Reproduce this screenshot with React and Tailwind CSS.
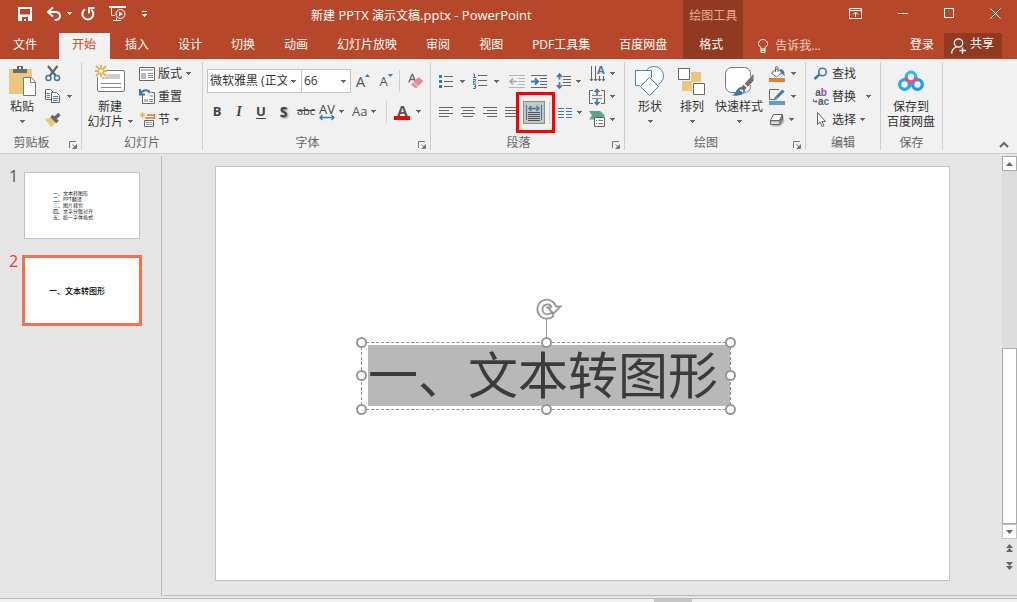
import React, { useState } from "react";

const TABS = ["插入", "设计", "切换", "动画", "幻灯片放映", "审阅", "视图", "PDF工具集", "百度网盘"];

const AGENDA = ["一、文本转图形", "二、PPT翻译", "三、图片裁剪", "四、文字分散对齐", "五、统一字体格式"];

function Svg({ w, h, children, className = "" }) {
  return (
    <svg
      width={w}
      height={h}
      viewBox={`0 0 ${w} ${h}`}
      fill="none"
      aria-hidden="true"
      className={`shrink-0 overflow-visible ${className}`}
    >
      {children}
    </svg>
  );
}

function Arrow({ className = "" }) {
  return (
    <Svg w={5} h={3} className={className}>
      <path d="M0 0h5v1h-1v1h-1v1h-1v-1h-1v-1h-1z" fill="currentColor" shapeRendering="crispEdges" />
    </Svg>
  );
}

function Group({ label, launcher, className, children }) {
  return (
    <section className={`flex h-[88px] shrink-0 flex-col border-r border-[#d0d0d0] ${className}`}>
      <div className="flex h-[69px]">{children}</div>
      <div className="flex h-[19px] items-end">
        <span className="flex-1 text-center leading-[14px] text-[#666]">{label}</span>
        {launcher && (
          <button type="button" aria-label={`${label}设置`} className="flex w-[18px] justify-center pb-px pl-0.5 text-[#777]">
            <Svg w={8} h={8}>
              <path d="M.5 7V.5H7M3.5 3.5l3 3M7.5 3.5v4h-4" stroke="currentColor" />
              <path d="M7 4v3H4z" fill="currentColor" />
            </Svg>
          </button>
        )}
      </div>
    </section>
  );
}

function BigButton({ icon, text, second, className }) {
  return (
    <button type="button" className={`flex shrink-0 flex-col items-center ${className}`}>
      <span className="flex h-[37px] items-center">{icon}</span>
      <span className="leading-[15px] whitespace-nowrap">{text}</span>
      <span className="flex h-[15px] items-center gap-1 leading-[15px] whitespace-nowrap">{second}</span>
    </button>
  );
}

function SmallButton({ icon, text, label, arrow }) {
  return (
    <button type="button" aria-label={label} className="flex h-[23px] items-center whitespace-nowrap">
      {icon}
      {text && <span className="ml-[3px]">{text}</span>}
      {arrow && <Arrow className={`text-[#666] ${arrow}`} />}
    </button>
  );
}

function IconButton({ label, className = "", children }) {
  return (
    <button type="button" aria-label={label} className={`flex h-[23px] shrink-0 items-center ${className}`}>
      {children}
    </button>
  );
}

function Lines({ rows }) {
  return (
    <Svg w={14} h={13}>
      {rows.map(([x, w], i) => (
        <path key={i} d={`M${x} ${i * 3 + 1.5}h${w}`} stroke="#666" />
      ))}
    </Svg>
  );
}

/* ---------- title bar and tabs ---------- */

function Header() {
  return (
    <header className="flex bg-[#b7472a] text-white">
      <div className="flex shrink-0 flex-col">
        <div className="flex h-[33px] items-start">
          <div className="flex h-[27px] w-[311px] items-center pl-[18px]">
            <button type="button" aria-label="保存">
              <Svg w={14} h={14}>
                <path d="M1 1h12v12H1z" stroke="#fff" strokeWidth="2" />
                <path d="M1 7.5h12V13H1z" fill="#fff" />
                <path d="M4 10h6v4H8v-2H6v2H4z" fill="#b7472a" />
              </Svg>
            </button>
            <button type="button" aria-label="撤消" className="ml-[14px] flex items-center gap-[5px]">
              <Svg w={16} h={14}>
                <path d="M2 5h7c3.500 0 5 1.800 5 4s-2 4-5.500 4" stroke="#fff" strokeWidth="2" />
                <path d="M7 .500L2 5l5 4.500" stroke="#fff" strokeWidth="2" />
              </Svg>
              <Arrow />
            </button>
            <button type="button" aria-label="重复" className="ml-[9px]">
              <Svg w={14} h={14}>
                <path d="M4 2.300A5.500 5.500 0 1 0 10 2.500" stroke="#fff" strokeWidth="2" />
                <path d="M8 6.500V1h5.500" stroke="#fff" strokeWidth="2" />
              </Svg>
            </button>
            <button type="button" aria-label="从头开始放映" className="ml-[14px]">
              <Svg w={18} h={16}>
                <path d="M0 1h17" stroke="#fff" strokeWidth="2" />
                <path d="M2.500 2v7.500H6M4 14.500h8M7.500 12v2" stroke="#fff" />
                <circle cx="11.500" cy="8" r="4.500" stroke="#fff" />
                <path d="M10 5.500l4 2.500-4 2.500z" fill="#fff" />
              </Svg>
            </button>
            <button type="button" aria-label="自定义快速访问工具栏" className="ml-[15px] flex flex-col items-center gap-0.5 pt-px">
              <span className="h-px w-[5px] bg-white" />
              <Arrow />
            </button>
          </div>
          <h1 className="text-[13px] leading-[31px] whitespace-nowrap">
            <span className="text-xs">新建</span> PPTX <span className="text-xs">演示文稿</span>.pptx - PowerPoint
          </h1>
        </div>
        <nav className="flex h-[26px] gap-0.5">
          <button type="button" className="mr-1.5 pr-[14px] pb-0.5 pl-[13px]">文件</button>
          <button type="button" className="bg-[#f1f1f1] pr-[14px] pb-0.5 pl-[13px] text-[#d24726]">开始</button>
          {TABS.map((tab) => (
            <button type="button" key={tab} className="pr-[14px] pb-0.5 pl-[13px] whitespace-nowrap">
              {tab}
            </button>
          ))}
        </nav>
      </div>

      <div className="ml-0.5 flex w-[60px] shrink-0 flex-col bg-[#923922] text-center">
        <span className="h-[33px] leading-[31px] text-[#eeaa93]">绘图工具</span>
        <button type="button" className="h-[26px] pr-1 pb-0.5">格式</button>
      </div>

      <div className="flex flex-1 flex-col">
        <div className="flex h-[33px] justify-end">
          <div className="flex h-[27px] items-center gap-[35px] pr-4">
            <button type="button" aria-label="功能区显示选项">
              <Svg w={14} h={11}>
                <path d="M.500 .500h12v10H.500zM1 2.500h11M6.500 9V4.500M4 6.500L6.500 4 9 6.500" stroke="#fff" />
              </Svg>
            </button>
            <button type="button" aria-label="最小化">
              <Svg w={11} h={11}><path d="M0 5.500h10" stroke="#fff" /></Svg>
            </button>
            <button type="button" aria-label="最大化">
              <Svg w={11} h={11}><path d="M.500 .500h9v9h-9z" stroke="#fff" /></Svg>
            </button>
            <button type="button" aria-label="关闭">
              <Svg w={11} h={11}><path d="M.500 .500l10 10M10.500 .500l-10 10" stroke="#fff" /></Svg>
            </button>
          </div>
        </div>
        <div className="flex h-[26px] items-center pr-[15px] pl-[15px]">
          <button type="button" className="flex items-center gap-[7px] text-[#f5d3c8]">
            <Svg w={10} h={14}>
              <path d="M3 10V8.500C1.500 7.500 .500 6.500 .500 4.800a4.500 4.300 0 0 1 9 0c0 1.700-1 2.700-2.500 3.700V10zM3 10v3.500h4V10M3 11.500h4" stroke="#fff" />
            </Svg>
            告诉我...
          </button>
          <button type="button" className="mr-2.5 ml-auto pb-0.5">登录</button>
          <button type="button" className="flex h-[25px] w-[58px] items-center gap-1 self-start bg-[#923922] pl-[7px]">
            <Svg w={15} h={16}>
              <circle cx="7.500" cy="5" r="4.200" stroke="#fff" strokeWidth="1.300" />
              <path d="M.700 15.500c0-3.500 2-5.500 4.500-6.500M8.500 12.500H15M11.500 9.500V16" stroke="#fff" strokeWidth="1.300" />
            </Svg>
            <span className="pb-1">共享</span>
          </button>
        </div>
      </div>
    </header>
  );
}

/* ---------- ribbon groups ---------- */

function ClipboardGroup() {
  return (
    <Group label="剪贴板" launcher className="w-[82px]">
      <BigButton
        className="ml-[7px] w-[30px]"
        text="粘贴"
        second={<Arrow className="text-[#666]" />}
        icon={
          <Svg w={28} h={32}>
            <path d="M1 4h23v25H1z" fill="#ecc67f" />
            <path d="M5 4h4V1h6v3h4v4H5z" fill="#6b6b6b" />
            <path d="M11 2h2v2h-2z" fill="#f1f1f1" />
            <path d="M15.500 12.500h8l4 5v13h-12z" fill="#fff" stroke="#777" />
            <path d="M22.500 12.500v5h5" stroke="#777" />
          </Svg>
        }
      />
      <div className="ml-[7px]">
        <SmallButton
          label="剪切"
          icon={
            <Svg w={17} h={17}>
              <path d="M4 1l7.500 9.500M13.500 1L6 10.500" stroke="#666" strokeWidth="2.200" />
              <circle cx="4.500" cy="13" r="2.500" stroke="#3f77ad" strokeWidth="1.500" />
              <circle cx="13" cy="13" r="2.500" stroke="#3f77ad" strokeWidth="1.500" />
            </Svg>
          }
        />
        <SmallButton
          label="复制"
          arrow="ml-1.5"
          icon={
            <Svg w={17} h={15}>
              <path d="M1.500 .500h5l3 3v7h-8z" fill="#fff" stroke="#666" />
              <path d="M3 4.500h3M3 6.500h3M3 8.500h3" stroke="#4a82b8" />
              <path d="M7.500 3.500h5l3 3v7h-8z" fill="#fff" stroke="#666" />
              <path d="M9 7.500h5M9 9.500h5M9 11.500h5" stroke="#4a82b8" />
            </Svg>
          }
        />
        <SmallButton
          label="格式刷"
          icon={
            <Svg w={17} h={16}>
              <path d="M1 7l6-1.500 5 5L7 15z" fill="#ecc67f" />
              <path d="M7.500 4l6 6M10 7l5.500-5" stroke="#666" strokeWidth="3.500" />
            </Svg>
          }
        />
      </div>
    </Group>
  );
}

function Spark({ x, y, r, color = "#e9b04c" }) {
  return (
    <path
      d={`M${x} ${y - r}v${2 * r}M${x - r} ${y}h${2 * r}M${x - r + 1} ${y - r + 1}l${2 * r - 2} ${2 * r - 2}M${x + r - 1} ${y - r + 1}l${2 - 2 * r} ${2 * r - 2}`}
      stroke={color}
      strokeWidth={r > 4 ? 1.8 : 1}
    />
  );
}

function SlidesGroup() {
  return (
    <Group label="幻灯片" className="w-[121px]">
      <BigButton
        className="ml-[5px] w-[46px]"
        text="新建"
        second={<>幻灯片<Arrow className="text-[#666]" /></>}
        icon={
          <Svg w={30} h={28} className="-mt-1">
            <rect x="2.500" y="5.500" width="27" height="21" rx="1.500" fill="#fff" stroke="#777" />
            <path d="M7 9h18v5H7z" fill="#ccc" />
            <path d="M6 18.500h20M6 22.500h20" stroke="#888" />
            <path d="M1 1h11v11H1z" fill="#f1f1f1" />
            <Spark x={6} y={6} r={6} />
            <circle cx="6" cy="6" r="1.800" fill="#fff" />
          </Svg>
        }
      />
      <div className="ml-1.5">
        <SmallButton
          text="版式"
          arrow="ml-1"
          icon={
            <Svg w={16} h={14}>
              <path d="M.500 .500h15v13H.500z" fill="#fff" stroke="#666" />
              <path d="M2 2h12v2H2zM2 6h5v6H2z" fill="#b9b9b9" />
              <path d="M9 6.500h5M9 8.500h5M9 10.500h5" stroke="#888" />
            </Svg>
          }
        />
        <SmallButton
          text="重置"
          icon={
            <Svg w={16} h={15}>
              <path d="M3.500 3.500h12v11h-12z" fill="#fff" stroke="#666" />
              <path d="M5 10h4v3H5zM11 6h3v2h-3z" fill="#b9b9b9" />
              <path d="M10 10.500h4M10 12.500h4" stroke="#888" />
              <path d="M2 5.500c1.500-4 7-5 9-1" stroke="#f1f1f1" strokeWidth="4" />
              <path d="M1.500 5c2-4.500 7.500-5 9.500-1M1 0v5.500H6" stroke="#3f77ad" strokeWidth="2" />
            </Svg>
          }
        />
        <SmallButton
          text="节"
          arrow="ml-1"
          icon={
            <Svg w={16} h={16}>
              <Spark x={3.5} y={3} r={3} />
              <path d="M8 3h7.500v3H6" stroke="#e27235" strokeWidth="1.300" />
              <path d="M5.500 8.500h9v6h-9z" fill="#fff" stroke="#666" />
              <path d="M7 10.500h6M7 12.500h6" stroke="#999" />
            </Svg>
          }
        />
      </div>
    </Group>
  );
}

function FontGroup() {
  const [font, setFont] = useState("微软雅黑 (正文)");
  const [size, setSize] = useState("66");

  return (
    <Group label="字体" launcher className="w-[228px]">
      <div className="pt-[7px]">
        <div className="flex h-6 items-center pl-1">
          <div className="relative">
            <select
              aria-label="字体"
              value={font}
              onChange={(e) => setFont(e.target.value)}
              className="block h-6 w-[95px] appearance-none border border-[#c3c3c3] bg-white pr-[14px] pl-0.5"
            >
              <option>微软雅黑 (正文)</option>
              <option>宋体</option>
            </select>
            <Arrow className="pointer-events-none absolute top-[11px] right-1.5 text-[#666]" />
          </div>
          <div className="relative -ml-px">
            <select
              aria-label="字号"
              value={size}
              onChange={(e) => setSize(e.target.value)}
              className="block h-6 w-[50px] appearance-none border border-[#c3c3c3] bg-white pr-[14px] pl-0.5"
            >
              <option>66</option>
              <option>60</option>
            </select>
            <Arrow className="pointer-events-none absolute top-[11px] right-[5px] text-[#666]" />
          </div>
          <IconButton label="增大字号" className="w-6 justify-center text-[#555]">
            <span className="text-[15px]">A</span>
            <Svg w={5} h={3} className="mb-3"><path d="M0 3h5L2.500 0z" fill="#3f77ad" /></Svg>
          </IconButton>
          <IconButton label="减小字号" className="w-[22px] justify-center text-[#555]">
            <span className="pt-0.5 text-[13px]">A</span>
            <Svg w={5} h={3} className="mb-3"><path d="M0 0h5L2.500 3z" fill="#3f77ad" /></Svg>
          </IconButton>
          <span className="ml-0.5 h-[22px] w-px bg-[#d0d0d0]" />
          <IconButton label="清除所有格式" className="ml-2">
            <Svg w={16} h={16}>
              <path d="M.800 9.500L4 1.500h.600l3.200 8M2 6.500h4.600" stroke="#666" strokeWidth="1.300" />
              <path d="M3 11.500L10.500 4l5 4L8 15.500z" fill="#e8899a" />
              <path d="M5 8.500l5.500 5.500" stroke="#f1f1f1" />
            </Svg>
          </IconButton>
        </div>

        <div className="mt-2 flex h-[23px] items-center pb-0.5 pl-[3px] text-[#444]">
          <IconButton label="加粗" className="w-[22px] justify-center text-[13px] font-bold">B</IconButton>
          <IconButton label="倾斜" className="w-[22px] justify-center font-['Liberation_Serif',serif] text-sm font-bold italic">I</IconButton>
          <IconButton label="下划线" className="w-[22px] justify-center text-[13px] font-bold underline underline-offset-2">U</IconButton>
          <IconButton label="文字阴影" className="w-[23px] justify-center text-sm font-bold [text-shadow:1px_1px_2px_#777]">S</IconButton>
          <IconButton label="删除线" className="w-[22px] justify-center text-[11px] line-through">abc</IconButton>
          <IconButton label="字符间距" className="ml-[2px] gap-1">
            <span className="flex w-4 flex-col items-center">
              <span className="text-[13px] leading-[11px]">AV</span>
              <Svg w={16} h={5}><path d="M1 2.500h14M3.500 0L1 2.500 3.500 5M12.500 0L15 2.500 12.500 5" stroke="#3f77ad" strokeWidth="1.300" /></Svg>
            </span>
            <Arrow className="text-[#666]" />
          </IconButton>
          <IconButton label="更改大小写" className="ml-2 gap-1 text-[13px]">
            <span className="text-[#555]">Aa</span>
            <Arrow className="text-[#666]" />
          </IconButton>
          <span className="ml-[10px] h-[22px] w-px bg-[#d0d0d0]" />
          <IconButton label="字体颜色" className="ml-[7px] gap-1.5">
            <span className="flex w-4 flex-col items-center border-b-4 border-[#ff0000] text-[15px] leading-3 font-bold text-[#555]">A</span>
            <Arrow className="text-[#666]" />
          </IconButton>
        </div>
      </div>
    </Group>
  );
}

function ParagraphGroup() {
  return (
    <Group label="段落" launcher className="w-[194px]">
      <div className="w-[158px] pt-[7px]">
        <div className="flex h-6 items-center pl-2">
          <IconButton label="项目符号" className="gap-[7px]">
            <Svg w={14} h={15}>
              <path d="M0 1h3v3H0zM0 6h3v3H0zM0 11h3v3H0z" fill="#3f77ad" />
              <path d="M5 2.500h9M5 7.500h9M5 12.500h9" stroke="#666" />
            </Svg>
            <Arrow className="text-[#666]" />
          </IconButton>
          <IconButton label="编号" className="ml-2 gap-[7px]">
            <Svg w={14} h={16}>
              <path d="M0 1h1.500v3M0 4.500h3M0 6.500h2.500v1.500H.500V10H3M0 11.500h2.500v4H0M1 13.500h1.500" stroke="#3f77ad" />
              <path d="M5 2.500h9M5 7.500h9M5 12.500h9" stroke="#666" />
            </Svg>
            <Arrow className="text-[#666]" />
          </IconButton>
          <IconButton label="降低列表级别" className="ml-2.5">
            <Svg w={16} h={13}>
              <path d="M0 .500h16M9 3.500h7M9 6.500h7M9 9.500h7M0 12.500h16" stroke="#b5b5b5" />
              <path d="M1 6.500h7M4 3.500L1 6.500l3 3" stroke="#a8a8a8" strokeWidth="1.700" />
            </Svg>
          </IconButton>
          <IconButton label="提高列表级别" className="ml-1.5">
            <Svg w={16} h={13}>
              <path d="M0 .500h16M9 3.500h7M9 6.500h7M9 9.500h7M0 12.500h16" stroke="#666" />
              <path d="M0 6.500h7M4 3.500l3 3-3 3" stroke="#3f77ad" strokeWidth="2" />
            </Svg>
          </IconButton>
          <IconButton label="行距" className="ml-2.5 gap-[5px]">
            <Svg w={14} h={16}>
              <path d="M2.500 1v5.500M2.500 9v6M0 4l2.500-3L5 4M0 12l2.500 3L5 12" stroke="#3f77ad" strokeWidth="1.700" />
              <path d="M6 3.500h8M6 6.500h8M6 9.500h8M6 12.500h8" stroke="#666" />
            </Svg>
            <Arrow className="text-[#666]" />
          </IconButton>
        </div>
        <div className="mt-2 flex h-[23px] items-center pl-2">
          <IconButton label="左对齐"><Lines rows={[[0, 14], [0, 10], [0, 14], [0, 10]]} /></IconButton>
          <IconButton label="居中" className="ml-2"><Lines rows={[[0, 14], [2, 10], [0, 14], [2, 10]]} /></IconButton>
          <IconButton label="右对齐" className="ml-2"><Lines rows={[[0, 14], [4, 10], [0, 14], [4, 10]]} /></IconButton>
          <IconButton label="两端对齐" className="ml-2"><Lines rows={[[0, 14], [0, 14], [0, 14], [0, 14]]} /></IconButton>
          <IconButton label="分散对齐" className="relative ml-1 w-[22px] justify-center border border-[#8f8f8f] bg-[#c5c5c5]">
            <Svg w={16} h={17}>
              <path d="M.500 1v15M15.500 1v15" stroke="#3f77ad" />
              <path d="M2.500 4.500h11M5.500 2L3 4.500 5.500 7M10.500 2L13 4.500 10.500 7" stroke="#3f77ad" strokeWidth="1.400" />
              <path d="M2 8.500h12M2 10.500h12M2 12.500h12M2 14.500h12M2 16.500h12" stroke="#555" />
            </Svg>
            <span className="pointer-events-none absolute -top-2.5 -right-[11px] -bottom-2.5 -left-2 border-3 border-[#ff0000]" />
          </IconButton>
          <span className="ml-1 h-[22px] w-px bg-[#d0d0d0]" />
          <IconButton label="分栏" className="ml-2 gap-[5px]">
            <Svg w={14} h={12}>
              <path d="M0 1.500h6M8 1.500h6M0 4.500h6M8 4.500h6M0 7.500h6M8 7.500h6M0 10.500h6M8 10.500h6" stroke="#3f77ad" />
            </Svg>
            <Arrow className="text-[#666]" />
          </IconButton>
        </div>
      </div>
      <div>
        <SmallButton
          label="文字方向"
          arrow="ml-1"
          icon={
            <Svg w={17} h={17}>
              <path d="M2.500 1v15M6.500 1v15M10.500 11v5M14.500 11v5M1 14l1.500 2L4 14M5 14l1.500 2L8 14M9 14l1.500 2 1.500-2M13 14l1.500 2 1.500-2" stroke="#666" />
              <text x="8" y="9" fontSize="11" fontWeight="700" fill="#3f77ad">A</text>
            </Svg>
          }
        />
        <SmallButton
          label="对齐文本"
          arrow="ml-1"
          icon={
            <Svg w={17} h={16}>
              <path d="M4 1.500H.500v13H4M12 1.500h3.500v13H12" stroke="#666" />
              <path d="M3 6.500h10M3 9.500h10" stroke="#888" />
              <path d="M8 0v6M5.500 3L8 .500 10.500 3M8 10v6M5.500 13L8 15.500l2.500-2.500" stroke="#3f77ad" strokeWidth="1.700" />
            </Svg>
          }
        />
        <SmallButton
          label="转换为 SmartArt"
          arrow="ml-1"
          icon={
            <Svg w={17} h={17}>
              <path d="M0 0h11l5 4.500-4 4H0l3-4z" fill="#5ba58b" />
              <path d="M5.500 6.500h10v9h-10z" fill="#fff" stroke="#666" />
              <path d="M7 9.500h1M9.500 9.500H14M7 12.500h1M9.500 12.500H14" stroke="#777" />
            </Svg>
          }
        />
      </div>
    </Group>
  );
}

function DrawingGroup() {
  return (
    <Group label="绘图" launcher className="w-[181px]">
      <BigButton
        className="ml-2 w-[34px]"
        text="形状"
        second={<Arrow className="text-[#666]" />}
        icon={
          <Svg w={30} h={30}>
            <circle cx="19" cy="10" r="9.500" fill="#fff" stroke="#4a82b8" />
            <path d="M.500 4.500h16v15H.500z" fill="#fff" stroke="#4a82b8" />
            <path d="M14.500 11.500l9 9-9 9-9-9z" fill="#fff" stroke="#f1f1f1" strokeWidth="3" />
            <path d="M14.500 11.500l9 9-9 9-9-9z" fill="#fff" stroke="#4a82b8" />
          </Svg>
        }
      />
      <BigButton
        className="ml-2 w-[34px]"
        text="排列"
        second={<Arrow className="text-[#666]" />}
        icon={
          <Svg w={28} h={28}>
            <path d="M13 5h10v10H13zM4 14h10v10H4z" fill="#ecc67f" />
            <path d="M.500 1.500h11v11H.500zM15.500 16.500h11v11h-11z" fill="#fff" stroke="#666" />
          </Svg>
        }
      />
      <BigButton
        className="ml-1.5 w-12"
        text="快速样式"
        second={<Arrow className="text-[#666]" />}
        icon={
          <Svg w={28} h={30}>
            <rect x=".500" y="1.500" width="25" height="25" rx="6" fill="#fff" stroke="#777" />
            <path d="M29 7v8L19 25l-3-4z" fill="#707070" stroke="#f1f1f1" />
            <path d="M18 17l5 5" stroke="#fff" strokeWidth="1.500" />
            <path d="M7 29.500c4-1 4-8 9-8.500 3 0 5 3 3.500 5.500-2 3-8 3.500-12.500 3z" fill="#3f77ad" />
            <path d="M15 24.500c2-1 3 .5 2.500 2" stroke="#fff" strokeWidth="1.500" />
          </Svg>
        }
      />
      <div className="ml-1.5">
        <SmallButton
          label="形状填充"
          arrow="ml-1.5"
          icon={
            <Svg w={16} h={16}>
              <path d="M2.500 7L8 2.500l5 4L7.500 11z" fill="#fff" stroke="#666" />
              <path d="M6.500 6V1.500a1.300 1.300 0 0 1 2.500 0V6" stroke="#666" />
              <path d="M11 3c3 0 5 2.500 4.500 7.500-1.500-2-2-3-3.500-3z" fill="#3f77ad" />
              <path d="M0 12h16v4H0z" fill="#ed7d31" />
            </Svg>
          }
        />
        <SmallButton
          label="形状轮廓"
          arrow="ml-1.5"
          icon={
            <Svg w={16} h={16}>
              <path d="M10 .500H.500v10H5" stroke="#666" />
              <path d="M14.500 1.500l-7 7" stroke="#3f77ad" strokeWidth="3" />
              <path d="M4.500 11.500L6 7.500 8.500 10z" fill="#3f77ad" />
              <path d="M0 12h16v4H0z" fill="#5b9bd5" />
            </Svg>
          }
        />
        <SmallButton
          label="形状效果"
          arrow="ml-1"
          icon={
            <Svg w={16} h={14}>
              <path d="M5 3h9.500l1 6-4.500 4.500H3z" fill="#bbb" />
              <path d="M4.500 1.500h9l-3 6h-9z" fill="#fff" stroke="#666" />
              <path d="M1.500 7.500h9l3-6v5l-3 5h-9z" fill="#888" stroke="#666" />
              <path d="M2 8.500h8v2.500H2z" fill="#ddd" />
            </Svg>
          }
        />
      </div>
    </Group>
  );
}

function EditingGroup() {
  return (
    <Group label="编辑" className="w-[75px]">
      <div className="ml-[7px]">
        <SmallButton
          text="查找"
          icon={
            <Svg w={16} h={14}>
              <circle cx="9.500" cy="5" r="3.800" stroke="#3f77ad" strokeWidth="1.600" />
              <path d="M6.500 7.500L1.500 12" stroke="#3f77ad" strokeWidth="2.500" />
            </Svg>
          }
        />
        <SmallButton
          text="替换"
          arrow="ml-2.5"
          icon={
            <span className="flex w-4 shrink-0 flex-col font-['Liberation_Sans',sans-serif] text-[10px] leading-[9px] font-bold text-[#555]">
              <span>a<span className="text-[#8a4fa8]">b</span></span>
              <span className="flex items-center">
                <Svg w={5} h={5}><path d="M.500 0v2.500H4M2.500 1L4 2.500 2.500 4" stroke="#3f77ad" /></Svg>
                a<span className="text-[#3f77ad]">c</span>
              </span>
            </span>
          }
        />
        <SmallButton
          text="选择"
          arrow="ml-1"
          icon={
            <Svg w={16} h={15}>
              <path d="M4.500 .500v12L7 10l2 4.500 2-1L9 9.500h3.500z" fill="#fff" stroke="#666" />
            </Svg>
          }
        />
      </div>
    </Group>
  );
}

function SaveGroup() {
  return (
    <Group label="保存" className="w-[62px]">
      <BigButton
        className="w-[60px]"
        text="保存到"
        second="百度网盘"
        icon={
          <Svg w={26} h={22}>
            <circle cx="6.500" cy="14.500" r="4.800" stroke="#22a7f0" strokeWidth="3.200" />
            <circle cx="19.500" cy="14.500" r="4.800" stroke="#1b9af7" strokeWidth="3.200" />
            <path d="M9.500 18.500L16 11.500" stroke="#22a7f0" strokeWidth="3.200" />
            <circle cx="13" cy="7" r="4.800" fill="#f1f1f1" stroke="#2cb9f2" strokeWidth="3.200" />
            <path d="M8.200 7a4.800 4.800 0 0 0 9.600 0" stroke="#f0506e" strokeWidth="3.200" />
          </Svg>
        }
      />
    </Group>
  );
}

function Ribbon() {
  return (
    <div className="flex border-b border-[#cdcdcd] bg-[#f1f1f1] py-[3px] text-[#333]">
      <ClipboardGroup />
      <SlidesGroup />
      <FontGroup />
      <ParagraphGroup />
      <DrawingGroup />
      <EditingGroup />
      <SaveGroup />
      <button type="button" aria-label="折叠功能区" className="mr-2 ml-auto self-end pb-0.5">
        <Svg w={10} h={6}><path d="M1 5l4-4 4 4" stroke="#666" strokeWidth="2" /></Svg>
      </button>
    </div>
  );
}

/* ---------- slides ---------- */

function Thumbnails() {
  return (
    <aside className="mt-0.5 flex w-[162px] shrink-0 flex-col gap-[14px] border-r border-[#bcbcbc] pt-[14px] pl-[9px] text-base">
      <button type="button" className="flex items-start text-left">
        <span className="w-[13px] leading-3 text-[#555]">1</span>
        <span className="block h-[71px] w-[120px] p-0.5">
          <span className="flex h-full flex-col border border-[#c3c3c3] bg-white pt-[17px] pl-7 text-[5px] leading-[6px] text-[#222]">
            {AGENDA.map((line) => (
              <span key={line} className="whitespace-nowrap">{line}</span>
            ))}
          </span>
        </span>
      </button>
      <button type="button" className="flex items-start text-left">
        <span className="w-[13px] leading-3 text-[#d24726]">2</span>
        <span className="flex h-[71px] w-[120px] items-center border-3 border-[#f2714f] bg-white pl-6 text-[8px] font-medium whitespace-nowrap text-black">
          一、文本转图形
        </span>
      </button>
    </aside>
  );
}

function Handle({ className }) {
  return <span className={`absolute size-[11px] rounded-full border-2 border-[#979797] bg-white ${className}`} />;
}

function TitleBox() {
  return (
    <div className="absolute top-[175px] left-[145px] h-[68px] w-[370px] border border-dashed border-[#8c8c8c]">
      <div className="mt-[2px] ml-[6px] h-[61px] bg-[#b8b8b8] text-[50px] leading-[60px] whitespace-nowrap text-[#3b3b3b]">
        一、文本转图形
      </div>
      <span className="absolute -top-6 left-[184px] h-6 w-px bg-[#979797]" />
      <Svg w={26} h={22} className="absolute -top-[45px] left-[174px]">
        <path d="M18 17.500A9.500 9.500 0 1 1 20 8.500h4.500l-7 7-6-6h4" stroke="#979797" strokeWidth="1.800" fill="#fff" />
        <path d="M15.800 9a5 5 0 1 0-.500 5.500l2.200 3" stroke="#979797" strokeWidth="1.800" />
      </Svg>
      <Handle className="-top-1.5 -left-1.5" />
      <Handle className="-top-1.5 left-[179px]" />
      <Handle className="-top-1.5 -right-1.5" />
      <Handle className="top-[27px] -left-1.5" />
      <Handle className="top-[27px] -right-1.5" />
      <Handle className="-bottom-1.5 -left-1.5" />
      <Handle className="-bottom-1.5 left-[179px]" />
      <Handle className="-right-1.5 -bottom-1.5" />
    </div>
  );
}

function ScrollBar() {
  return (
    <div className="flex w-[15px] shrink-0 flex-col pt-0.5 text-[#666]">
      <button type="button" aria-label="向上滚动" className="flex h-[15px] items-center justify-center border border-[#ababab] bg-white">
        <Svg w={7} h={4}><path d="M0 4h7L3.500 0z" fill="currentColor" /></Svg>
      </button>
      <div className="flex-1 bg-[#dcdcdc]" />
      <div className="h-[176px] border border-[#ababab] bg-white" />
      <button type="button" aria-label="向下滚动" className="flex h-[15px] items-center justify-center border border-[#c3c3c3] bg-white">
        <Svg w={7} h={4}><path d="M0 0h7L3.500 4z" fill="currentColor" /></Svg>
      </button>
      <button type="button" aria-label="上一张幻灯片" className="mt-[5px] flex justify-center">
        <Svg w={7} h={8}><path d="M0 4h7L3.500 0zM0 8h7L3.500 4z" fill="currentColor" /></Svg>
      </button>
      <button type="button" aria-label="下一张幻灯片" className="mt-[10px] mb-[25px] flex justify-center">
        <Svg w={7} h={8}><path d="M0 0h7L3.500 4zM0 4h7L3.500 8z" fill="currentColor" /></Svg>
      </button>
    </div>
  );
}

function App() {
  return (
    <div className="flex min-h-screen flex-col bg-[#e5e5e5] font-['Open_Sans','Noto_Sans_CJK_SC',sans-serif] text-xs">
      <Header />
      <Ribbon />
      <div className="flex flex-1">
        <Thumbnails />
        <main className="ml-0.5 flex flex-1 border-b border-[#bcbcbc]">
          <div className="flex-1 px-[51px] pt-3">
            <div className="relative mr-px aspect-[735/415] border border-[#c3c3c3] bg-white">
              <TitleBox />
            </div>
          </div>
          <ScrollBar />
        </main>
      </div>
      <footer className="mt-0.5 flex h-1 border-t border-[#bcbcbc] bg-[#f1f1f1]">
        <span className="ml-[654px] w-[38px] bg-[#c6c6c6]" />
      </footer>
    </div>
  );
}

export default App;
